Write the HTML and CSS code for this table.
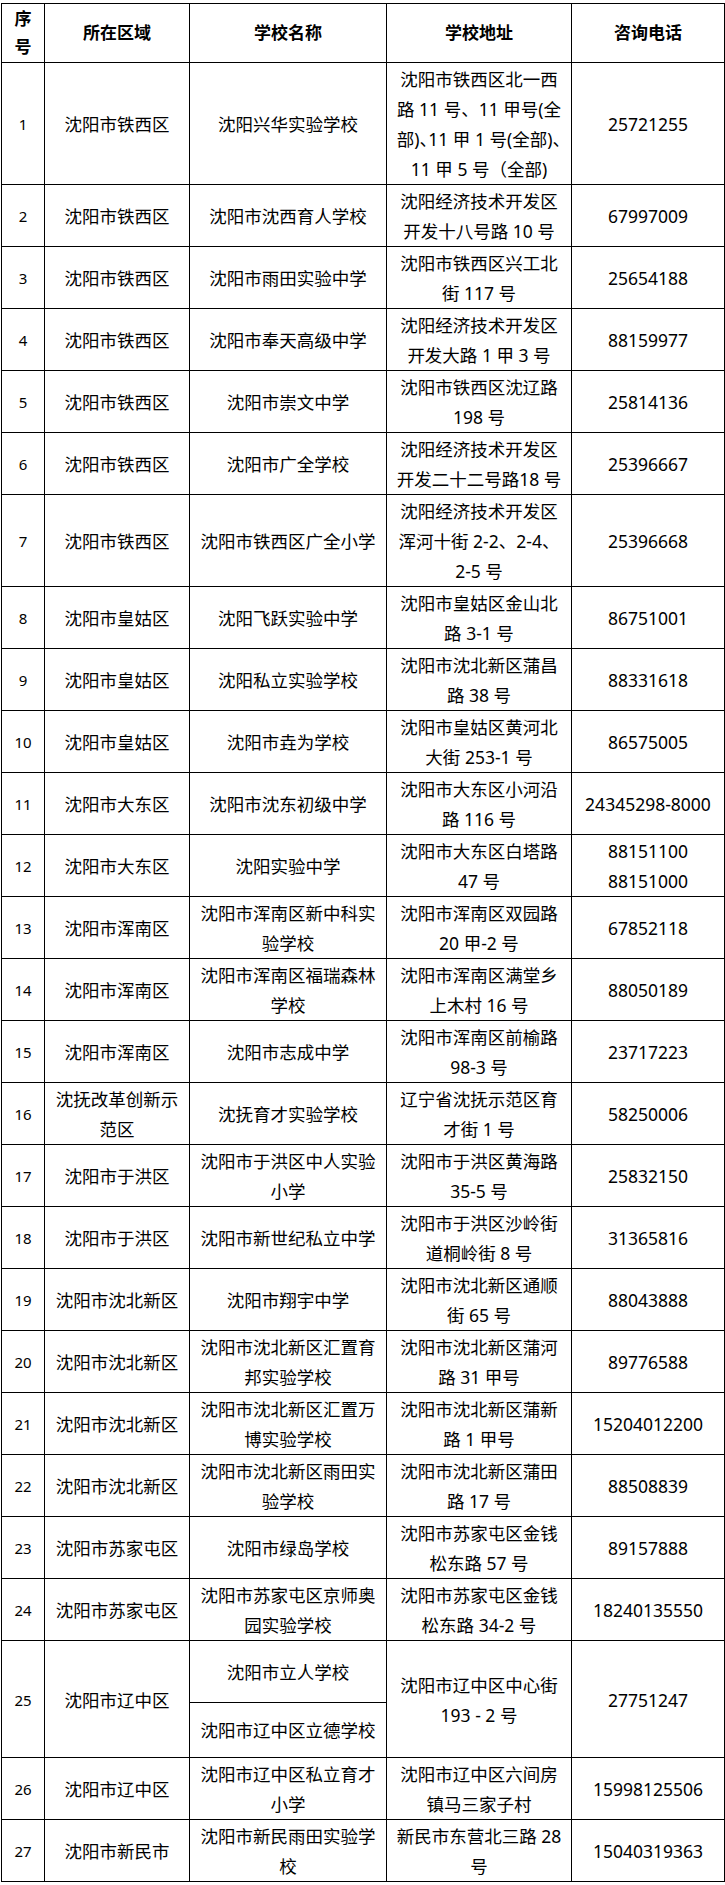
FILE: index.html
```html
<!DOCTYPE html>
<html lang="zh-CN">
<head>
<meta charset="utf-8">
<title>学校咨询电话</title>
<link rel="stylesheet" href="styles.css">
</head>
<body>
<div class="page">
<table class="schools">
<colgroup>
<col class="c-no"><col class="c-area"><col class="c-name"><col class="c-addr"><col class="c-tel">
</colgroup>
<thead>
<tr><th>序<br>号</th><th>所在区域</th><th>学校名称</th><th>学校地址</th><th>咨询电话</th></tr>
</thead>
<tbody>
<tr><td class="no">1</td><td>沈阳市铁西区</td><td>沈阳兴华实验学校</td><td>沈阳市铁西区北一西<br>路 11 号、11 甲号(全<br><span class="tight">部)、11 甲 1 号(全部)、</span><br>11 甲 5 号（全部)</td><td>25721255</td></tr>
<tr><td class="no">2</td><td>沈阳市铁西区</td><td>沈阳市沈西育人学校</td><td>沈阳经济技术开发区<br>开发十八号路 10 号</td><td>67997009</td></tr>
<tr><td class="no">3</td><td>沈阳市铁西区</td><td>沈阳市雨田实验中学</td><td>沈阳市铁西区兴工北<br>街 117 号</td><td>25654188</td></tr>
<tr><td class="no">4</td><td>沈阳市铁西区</td><td>沈阳市奉天高级中学</td><td>沈阳经济技术开发区<br>开发大路 1 甲 3 号</td><td>88159977</td></tr>
<tr><td class="no">5</td><td>沈阳市铁西区</td><td>沈阳市崇文中学</td><td>沈阳市铁西区沈辽路<br>198 号</td><td>25814136</td></tr>
<tr><td class="no">6</td><td>沈阳市铁西区</td><td>沈阳市广全学校</td><td>沈阳经济技术开发区<br>开发二十二号路18 号</td><td>25396667</td></tr>
<tr><td class="no">7</td><td>沈阳市铁西区</td><td>沈阳市铁西区广全小学</td><td>沈阳经济技术开发区<br>浑河十街 2-2、2-4、<br>2-5 号</td><td>25396668</td></tr>
<tr><td class="no">8</td><td>沈阳市皇姑区</td><td>沈阳飞跃实验中学</td><td>沈阳市皇姑区金山北<br>路 3-1 号</td><td>86751001</td></tr>
<tr><td class="no">9</td><td>沈阳市皇姑区</td><td>沈阳私立实验学校</td><td>沈阳市沈北新区蒲昌<br>路 38 号</td><td>88331618</td></tr>
<tr><td class="no">10</td><td>沈阳市皇姑区</td><td>沈阳市垚为学校</td><td>沈阳市皇姑区黄河北<br>大街 253-1 号</td><td>86575005</td></tr>
<tr><td class="no">11</td><td>沈阳市大东区</td><td>沈阳市沈东初级中学</td><td>沈阳市大东区小河沿<br>路 116 号</td><td>24345298-8000</td></tr>
<tr><td class="no">12</td><td>沈阳市大东区</td><td>沈阳实验中学</td><td>沈阳市大东区白塔路<br>47 号</td><td>88151100<br>88151000</td></tr>
<tr><td class="no">13</td><td>沈阳市浑南区</td><td>沈阳市浑南区新中科实<br>验学校</td><td>沈阳市浑南区双园路<br>20 甲-2 号</td><td>67852118</td></tr>
<tr><td class="no">14</td><td>沈阳市浑南区</td><td>沈阳市浑南区福瑞森林<br>学校</td><td>沈阳市浑南区满堂乡<br>上木村 16 号</td><td>88050189</td></tr>
<tr><td class="no">15</td><td>沈阳市浑南区</td><td>沈阳市志成中学</td><td>沈阳市浑南区前榆路<br>98-3 号</td><td>23717223</td></tr>
<tr><td class="no">16</td><td>沈抚改革创新示<br>范区</td><td>沈抚育才实验学校</td><td>辽宁省沈抚示范区育<br>才街 1 号</td><td>58250006</td></tr>
<tr><td class="no">17</td><td>沈阳市于洪区</td><td>沈阳市于洪区中人实验<br>小学</td><td>沈阳市于洪区黄海路<br>35-5 号</td><td>25832150</td></tr>
<tr><td class="no">18</td><td>沈阳市于洪区</td><td>沈阳市新世纪私立中学</td><td>沈阳市于洪区沙岭街<br>道桐岭街 8 号</td><td>31365816</td></tr>
<tr><td class="no">19</td><td>沈阳市沈北新区</td><td>沈阳市翔宇中学</td><td>沈阳市沈北新区通顺<br>街 65 号</td><td>88043888</td></tr>
<tr><td class="no">20</td><td>沈阳市沈北新区</td><td>沈阳市沈北新区汇置育<br>邦实验学校</td><td>沈阳市沈北新区蒲河<br>路 31 甲号</td><td>89776588</td></tr>
<tr><td class="no">21</td><td>沈阳市沈北新区</td><td>沈阳市沈北新区汇置万<br>博实验学校</td><td>沈阳市沈北新区蒲新<br>路 1 甲号</td><td>15204012200</td></tr>
<tr><td class="no">22</td><td>沈阳市沈北新区</td><td>沈阳市沈北新区雨田实<br>验学校</td><td>沈阳市沈北新区蒲田<br>路 17 号</td><td>88508839</td></tr>
<tr><td class="no">23</td><td>沈阳市苏家屯区</td><td>沈阳市绿岛学校</td><td>沈阳市苏家屯区金钱<br>松东路 57 号</td><td>89157888</td></tr>
<tr><td class="no">24</td><td>沈阳市苏家屯区</td><td>沈阳市苏家屯区京师奥<br>园实验学校</td><td>沈阳市苏家屯区金钱<br>松东路 34-2 号</td><td>18240135550</td></tr>
<tr><td class="no" rowspan="2">25</td><td rowspan="2">沈阳市辽中区</td><td class="sub-a">沈阳市立人学校</td><td rowspan="2">沈阳市辽中区中心街<br>193 - 2 号</td><td rowspan="2">27751247</td></tr>
<tr><td class="sub-b">沈阳市辽中区立德学校</td></tr>
<tr><td class="no">26</td><td>沈阳市辽中区</td><td>沈阳市辽中区私立育才<br>小学</td><td>沈阳市辽中区六间房<br>镇马三家子村</td><td>15998125506</td></tr>
<tr><td class="no">27</td><td>沈阳市新民市</td><td>沈阳市新民雨田实验学<br>校</td><td>新民市东营北三路 28<br>号</td><td>15040319363</td></tr>
</tbody>
</table>
</div>
</body>
</html>
```

FILE: styles.css
```css
html, body {
  margin: 0;
  padding: 0;
  background: #ffffff;
}

.page {
  padding: 3px 0 0 1px;
}

.schools {
  border-collapse: collapse;
  table-layout: fixed;
  width: 723px;
  font-family: "Noto Sans", "Noto Sans CJK SC", sans-serif;
  font-size: 17.5px;
  color: #000000;
}

.c-no { width: 43px; }
.c-area { width: 145px; }
.c-name { width: 197px; }
.c-addr { width: 185px; }
.c-tel { width: 153px; }

.schools th,
.schools td {
  border: 1px solid #000000;
  text-align: center;
  vertical-align: middle;
  white-space: nowrap;
  padding: 1px 0 0 0;
  line-height: 30px;
  overflow: visible;
}

.schools th {
  font-weight: bold;
  font-size: 17px;
  line-height: 28px;
  padding: 1px 0 1px 0;
}

.schools td.no {
  font-size: 15px;
}

.tight {
  font-feature-settings: "halt";
}

.schools td.sub-a {
  padding: 16px 0 15px 0;
}

.schools td.sub-b {
  padding: 12px 0 12px 0;
}
```
